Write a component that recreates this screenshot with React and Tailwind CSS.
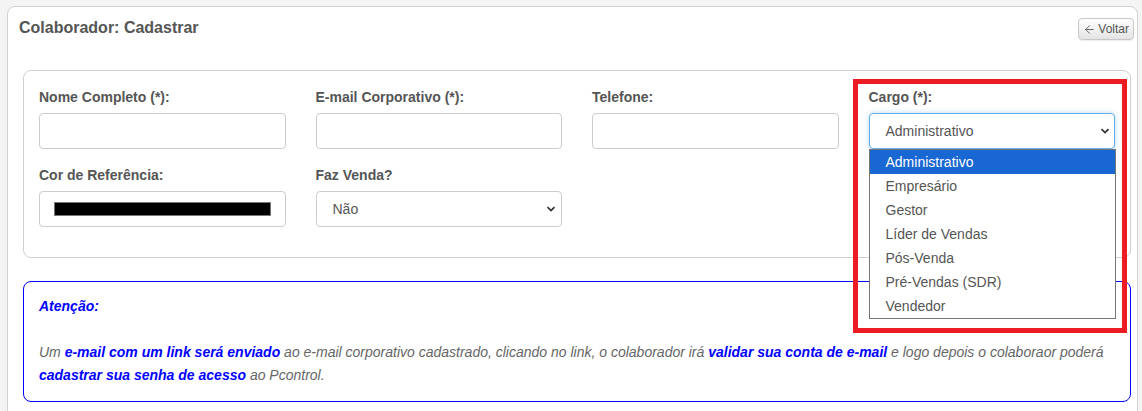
import { ArrowLeft } from "lucide-react";

const Chevron = () => (
  <svg width="10" height="10" viewBox="0 0 10 10" className="shrink-0">
    <path d="M1.5 3.2 L5 6.6 L8.5 3.2" fill="none" stroke="#333" strokeWidth="1.8" />
  </svg>
);

const Label = ({ children }) => (
  <label className="block h-[16px] leading-[16px] mb-[8px] text-[14px] font-bold text-[#555]">{children}</label>
);

const Input = () => <div className="h-[36px] border border-[#ccc] rounded-[4px] bg-white" />;

const opcoes = ["Administrativo", "Empresário", "Gestor", "Líder de Vendas", "Pós-Venda", "Pré-Vendas (SDR)", "Vendedor"];

export default function App() {
  return (
    <div className="min-h-[411px] bg-[#f4f4f4] pt-[6px] pl-[7px] pr-[4px] font-['Liberation_Sans',Arial,sans-serif] overflow-hidden">
      <div className="relative bg-white border border-[#d2d2d2] rounded-[8px] pl-[15px] pr-[6px] pb-[20px]">
        {/* Cabeçalho */}
        <div className="flex justify-between items-start pt-[10px] -ml-[4px] -mr-[3px]">
          <h1 className="text-[16px] leading-[22px] font-bold text-[#555]">Colaborador: Cadastrar</h1>
          <button className="mt-[1px] h-[22px] px-[4px] flex items-center gap-[2px] text-[12px] text-[#555] border border-[#c8c8c8] rounded-[4px] bg-gradient-to-b from-white to-[#e4e4e4] shadow-[0_1px_1px_rgba(0,0,0,0.08)]">
            <ArrowLeft size={13} strokeWidth={1.6} />
            Voltar
          </button>
        </div>

        {/* Formulário */}
        <div className="relative mt-[30px] border border-[#d0d0d0] rounded-[8px] px-[15px] pt-[18px] pb-[30px]">
          <div className="grid grid-cols-4 gap-x-[30px] gap-y-[18px]">
            <div>
              <Label>Nome Completo (*):</Label>
              <Input />
            </div>
            <div>
              <Label>E-mail Corporativo (*):</Label>
              <Input />
            </div>
            <div>
              <Label>Telefone:</Label>
              <Input />
            </div>
            <div className="relative">
              <Label>Cargo (*):</Label>
              <div className="h-[36px] border border-[#66afe9] rounded-[4px] bg-white flex items-center justify-between pl-[16px] pr-[4px] text-[14px] text-[#555] shadow-[0_0_5px_rgba(102,175,233,0.5)]">
                Administrativo
                <Chevron />
              </div>
              <div className="absolute z-10 left-0 top-[60px] w-[247px] border border-[#767676] bg-white">
                {opcoes.map((o, i) => (
                  <div
                    key={o}
                    className={
                      i === 0
                        ? "h-[24px] leading-[24px] pl-[16px] text-[14px] bg-[#1967d2] text-white"
                        : "h-[24px] leading-[24px] pl-[16px] text-[14px] text-[#555]"
                    }
                  >
                    {o}
                  </div>
                ))}
              </div>
            </div>
            <div>
              <Label>Cor de Referência:</Label>
              <div className="h-[36px] border border-[#ccc] rounded-[4px] bg-white flex items-center px-[14px]">
                <div className="h-[14px] w-full bg-black border border-[#777]" />
              </div>
            </div>
            <div>
              <Label>Faz Venda?</Label>
              <div className="h-[36px] border border-[#ccc] rounded-[4px] bg-white flex items-center justify-between pl-[16px] pr-[5px] text-[14px] text-[#555]">
                Não
                <Chevron />
              </div>
            </div>
          </div>
        </div>

        {/* Atenção */}
        <div className="mt-[23px] border border-[#0000ff] rounded-[8px] px-[15px] pt-[13px] pb-[14px] text-[14px] leading-[23px] italic text-[#666]">
          <p className="font-bold text-[#0000ff]">Atenção:</p>
          <br />
          <p>
            Um <b className="text-[#0000ff]">e-mail com um link será enviado</b> ao e-mail corporativo cadastrado, clicando no link, o colaborador irá{" "}
            <b className="text-[#0000ff]">validar sua conta de e-mail</b> e logo depois o colaboraor poderá{" "}
            <b className="text-[#0000ff]">cadastrar sua senha de acesso</b> ao Pcontrol.
          </p>
        </div>

        {/* Destaque em vermelho */}
        <div className="absolute z-20 left-[845px] top-[72px] w-[274px] h-[254px] border-[5px] border-[#ec1c24] pointer-events-none" />
      </div>
    </div>
  );
}
